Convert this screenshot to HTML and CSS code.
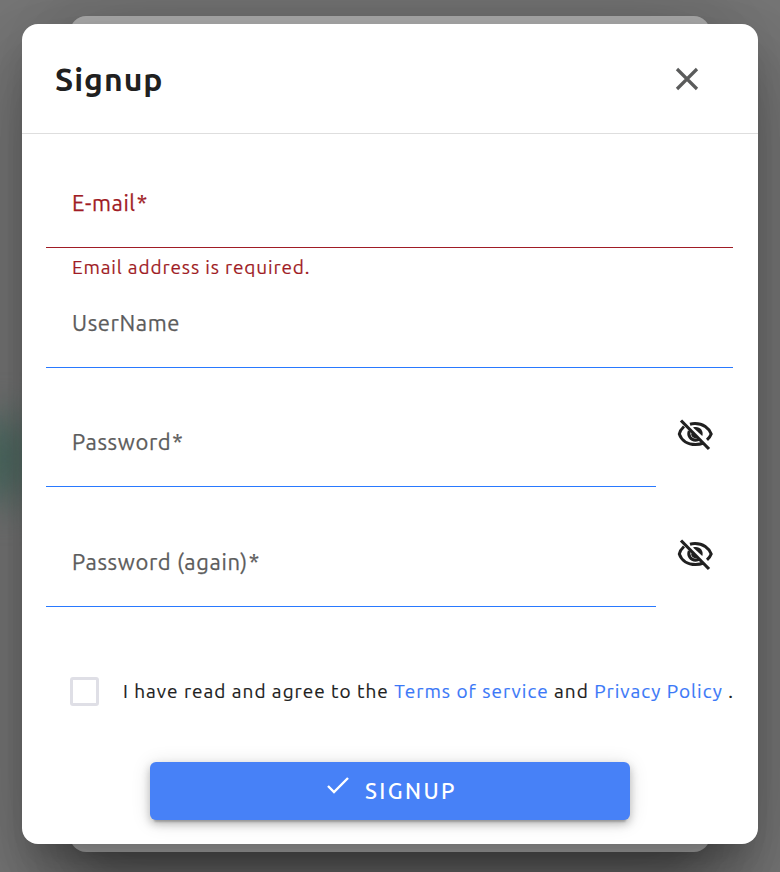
FILE: index.html
```html
<!DOCTYPE html>
<html lang="en">
<head>
<meta charset="utf-8">
<title>Signup</title>
<link rel="stylesheet" href="styles.css">
</head>
<body>
<div class="glow"></div>
<div class="sheet"></div>
<main class="dialog">
  <header class="header">
    <h1 class="title">Signup</h1>
    <button class="close" aria-label="Close"><svg width="24" height="24" viewBox="0 0 24 24"><path d="M2 2 22 22M22 2 2 22"/></svg></button>
  </header>
  <form class="form">
    <div class="field invalid"><label class="label">E-mail<span class="star">*</span></label></div>
    <p class="error">Email address is required.</p>
    <div class="field"><label class="label">UserName</label></div>
    <div class="row">
      <div class="field"><label class="label">Password<span class="star">*</span></label></div>
      <svg class="eye" width="38" height="34" viewBox="0 0 38 34"><path d="M8 8.500C5.500 10.800 3.900 13.200 3.300 16 5.500 22.500 11.500 26.600 19.500 26.600c3 0 5.600-.6 8-1.600M14 6.200C15.600 5.700 17.300 5.500 19 5.500c8 0 14 4.500 16.200 10.500-.8 2.200-2.200 4.100-4.200 5.900"/><path d="M13.300 13c-1.700 5 1.500 9.200 6.300 9.200 1.500 0 2.800-.4 4-1.200"/><path class="iris" d="M17 9.500c6-2 11 2.500 9.300 8.500Z"/><path d="M16.500 15.500c.2 2.500 1.500 3.500 4 3.700"/><path class="slash" d="M5 2.500 33 31"/></svg>
    </div>
    <div class="row second">
      <div class="field"><label class="label">Password (again)<span class="star">*</span></label></div>
      <svg class="eye" width="38" height="34" viewBox="0 0 38 34"><path d="M8 8.500C5.500 10.800 3.900 13.200 3.300 16 5.500 22.500 11.500 26.600 19.500 26.600c3 0 5.600-.6 8-1.600M14 6.200C15.600 5.700 17.300 5.500 19 5.500c8 0 14 4.500 16.200 10.500-.8 2.200-2.200 4.100-4.200 5.900"/><path d="M13.300 13c-1.700 5 1.500 9.200 6.300 9.200 1.500 0 2.800-.4 4-1.200"/><path class="iris" d="M17 9.500c6-2 11 2.500 9.300 8.500Z"/><path d="M16.500 15.500c.2 2.500 1.500 3.500 4 3.700"/><path class="slash" d="M5 2.500 33 31"/></svg>
    </div>
    <div class="terms"><span class="box"></span><span class="agree">I have read and agree to the <a>Terms of service</a> and <a>Privacy Policy</a> .</span></div>
    <button type="button" class="submit"><svg width="24" height="20" viewBox="0 0 24 20"><path d="M2 10 8 16 22 2"/></svg><span>SIGNUP</span></button>
  </form>
</main>
</body>
</html>
```
FILE: styles.css
```css
* { box-sizing: border-box; }
body { margin: 0; width: 780px; height: 872px; padding: 24px 22px; overflow: hidden; position: relative; background: #777; color: #202020; font-family: Ubuntu, "Noto Sans", sans-serif; }
.glow { position: absolute; left: -35px; top: 420px; width: 65px; height: 78px; background: #4c6c63; filter: blur(20px); }
.sheet { position: absolute; left: 70px; top: 16px; width: 640px; height: 836px; border-radius: 16px; background: #aaa; box-shadow: 0 22px 30px -14px rgba(0,0,0,.2), 0 48px 76px 6px rgba(0,0,0,.14), 0 18px 92px 16px rgba(0,0,0,.12); }
.dialog { position: relative; height: 820px; border-radius: 16px; background: #fff; box-shadow: 0 22px 30px -14px rgba(0,0,0,.2), 0 48px 76px 6px rgba(0,0,0,.14), 0 18px 92px 16px rgba(0,0,0,.12); }
.header { height: 110px; border-bottom: 1px solid #dedede; display: flex; align-items: center; justify-content: space-between; padding: 0 59px 0 33px; }
.title { margin: 0; font-size: 32px; line-height: 40px; font-weight: 700; letter-spacing: 1px; }
.close { padding: 0; border: 0; background: none; display: flex; }
svg { fill: none; stroke: #202020; stroke-width: 3; flex: none; }
.close svg { stroke: #5a5b5b; stroke-width: 3.2; }
.form { padding: 24px 25px 0 24px; }
.field { height: 90px; flex: 1; border-bottom: 1px solid #2979ff; padding: 30px 26px; }
.invalid { border-color: #a01c25; }
.label { display: block; font-size: 22px; line-height: 30px; color: #5c5c5c; white-space: nowrap; letter-spacing: .6px; -webkit-text-stroke: .25px currentColor; }
.star { margin-left: 1px; }
.invalid .label, .error { color: #a01c25; }
.error { margin: 0; height: 30px; padding: 6px 26px 0; font-size: 19px; line-height: 26px; letter-spacing: .85px; -webkit-text-stroke: .15px currentColor; }
.row { display: flex; margin-top: 29px; }
.second { margin-top: 30px; }
.eye { margin: 21px 19px 0 20px; }
.iris { fill: #202020; stroke: none; }
.slash { stroke-width: 3.2; }
.terms { display: flex; align-items: center; height: 30px; margin: 69px 0 56px 24px; }
.box { width: 29px; height: 29px; border: 3px solid #dfdfe6; border-radius: 3px; margin-right: 24px; flex: none; }
.agree { font-size: 19px; line-height: 28px; white-space: nowrap; letter-spacing: 1px; -webkit-text-stroke: .15px currentColor; }
.agree a { color: #3b78f7; }
.submit { width: 480px; height: 58px; margin: 0 auto; border: 0; border-radius: 6px; background: #4781f7; color: #fff; display: flex; align-items: center; justify-content: center; font: 500 22px/30px Ubuntu, "Noto Sans", sans-serif; letter-spacing: 2.4px; box-shadow: 0 6px 2px -4px rgba(0,0,0,.2), 0 4px 8px rgba(0,0,0,.24), 0 2px 20px rgba(0,0,0,.12); }
.submit svg { stroke: #fff; stroke-width: 2.4; margin: -10px 15px 0 4px; }
```
